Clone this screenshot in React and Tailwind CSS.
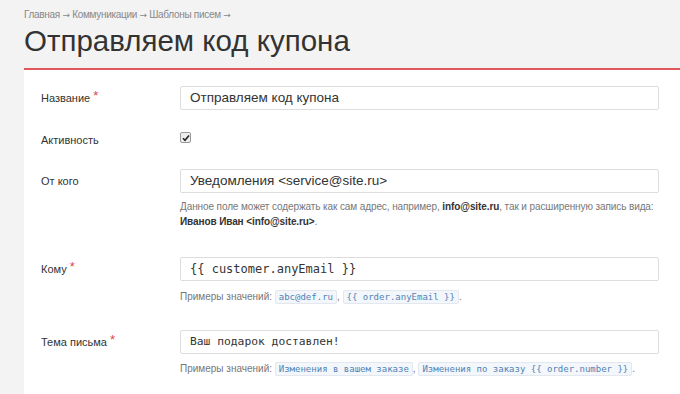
export default function App() {
  const sans = { fontFamily: '"Liberation Sans", Arial, sans-serif' };
  const mono = { fontFamily: '"DejaVu Sans Mono", monospace' };
  const Chip = ({ children }) => (
    <code className="rounded-[2px] border border-[#e3e8ee] bg-[#f3f7fb] px-[3px] py-[1px] text-[9px] text-[#5182b5]" style={mono}>
      {children}
    </code>
  );
  const Star = () => <span className="relative top-[-3px] ml-[3px] text-[13px] leading-none text-[#e0474c]">*</span>;
  const Arrow = () => <span className="text-[9px] text-[#888]" style={{ fontFamily: '"DejaVu Sans", sans-serif' }}>→</span>;
  return (
    <div className="h-[394px] w-[680px] overflow-hidden bg-[#f3f3f3]" style={sans}>
      <div className="pl-6 pt-[8px] text-[10px] leading-[13px] tracking-[-0.3px] text-[#888]">
        Главная <Arrow /> Коммуникации <Arrow /> Шаблоны писем <Arrow />
      </div>
      <h1 className="pl-6 pt-[2px] text-[29.5px] leading-[34px] text-[#333]">Отправляем код купона</h1>
      <div className="ml-6 mt-[10px] border-t-2 border-[#e0585e] bg-white pb-6 pl-[17px] pr-[21px] pt-4">
        <div className="flex items-center">
          <div className="flex h-6 w-[139px] items-center text-[11px] text-[#333]">Название<Star /></div>
          <div className="flex h-6 flex-1 items-center rounded-[2px] border border-[#ddd] px-[9px] text-[13.5px] text-[#333]">Отправляем код купона</div>
        </div>
        <div className="mt-[22px] flex items-start">
          <div className="w-[139px] text-[11px] leading-[17px] text-[#333]">Активность</div>
          <span className="flex h-[11px] w-[11px] items-center justify-center rounded-[2px] border border-[#999] bg-[#eee]">
            <svg width="8" height="8" viewBox="0 0 8 8"><path d="M1 4.2 L3 6.2 L7 1.5" fill="none" stroke="#222" strokeWidth="1.6" /></svg>
          </span>
        </div>
        <div className="mt-[20px] flex items-start">
          <div className="flex h-6 w-[139px] items-center text-[11px] text-[#333]">От кого</div>
          <div className="flex-1">
            <div className="flex h-6 items-center rounded-[2px] border border-[#ddd] px-[9px] text-[13.5px] text-[#333]">Уведомления &lt;service@site.ru&gt;</div>
            <div className="mt-[6px] text-[10px] leading-[15px] tracking-[-0.1px] text-[#777]">
              Данное поле может содержать как сам адрес, например, <b className="text-[#333]">info@site.ru</b>, так и расширенную запись вида: <b className="text-[#333]">Иванов Иван &lt;info@site.ru&gt;</b>.
            </div>
          </div>
        </div>
        <div className="mt-[28px] flex items-start">
          <div className="flex h-6 w-[139px] items-center text-[11px] text-[#333]">Кому<Star /></div>
          <div className="flex-1">
            <div className="flex h-6 items-center rounded-[2px] border border-[#ddd] px-[9px] text-[12px] text-[#333]" style={mono}>{'{{ customer.anyEmail }}'}</div>
            <div className="mt-[8px] text-[10px] leading-[15px] text-[#777]">
              Примеры значений: <Chip>abc@def.ru</Chip>, <Chip>{'{{ order.anyEmail }}'}</Chip>.
            </div>
          </div>
        </div>
        <div className="mt-[25px] flex items-start">
          <div className="flex h-6 w-[139px] items-center text-[11px] text-[#333]">Тема письма<Star /></div>
          <div className="flex-1">
            <div className="flex h-6 items-center rounded-[2px] border border-[#ddd] px-[9px] text-[11.3px] text-[#333]" style={mono}>Ваш подарок доставлен!</div>
            <div className="mt-[7px] text-[10px] leading-[15px] text-[#777]">
              Примеры значений: <Chip>Изменения в вашем заказе</Chip>, <Chip>{'Изменения по заказу {{ order.number }}'}</Chip>.
            </div>
          </div>
        </div>
      </div>
    </div>
  );
}
